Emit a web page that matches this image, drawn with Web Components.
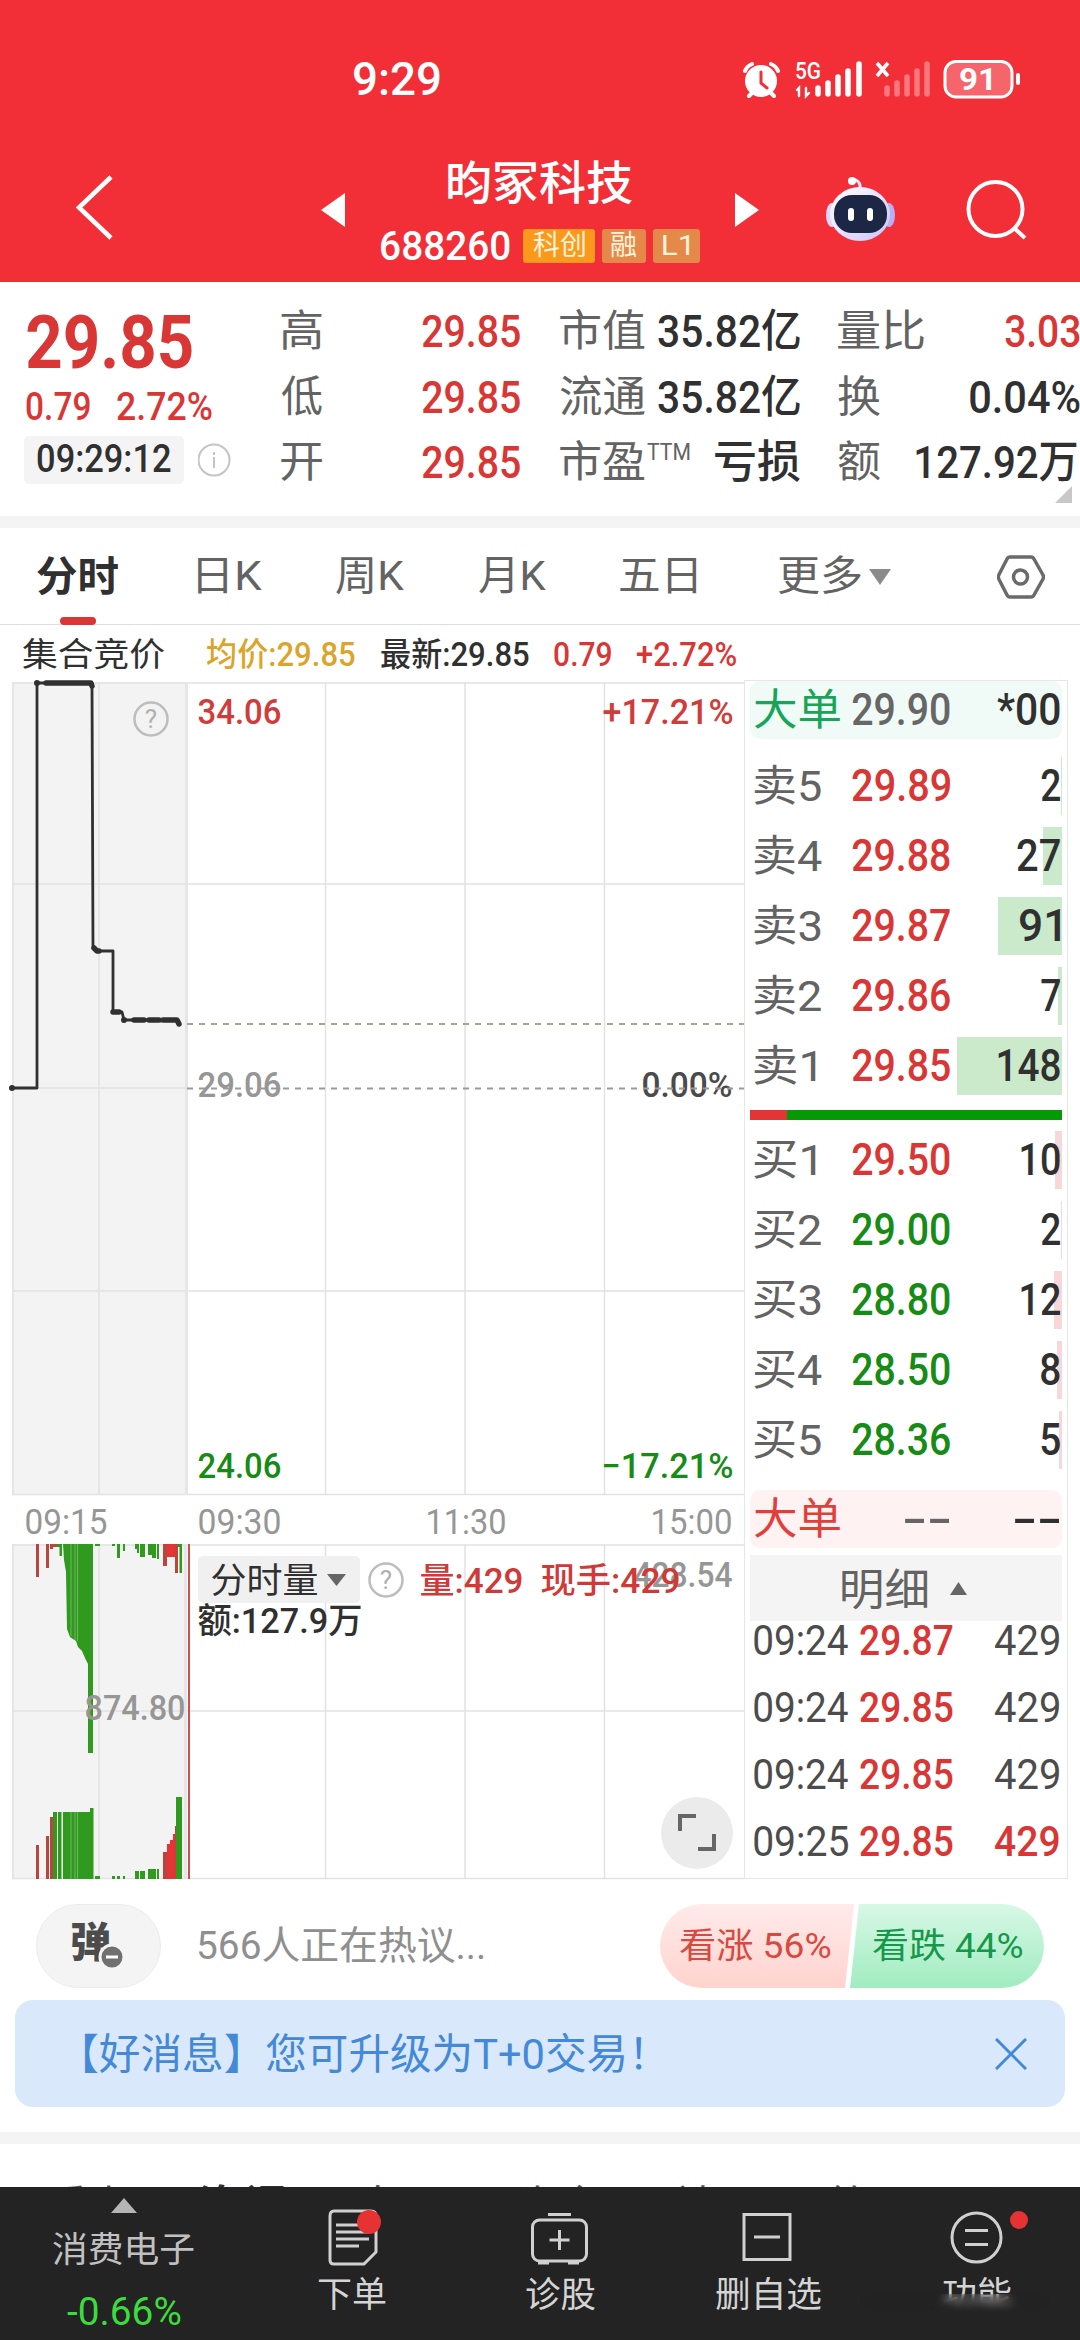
<!DOCTYPE html>
<html lang="zh-CN">
<head>
<meta charset="utf-8">
<title>688260</title>
<style>
    html, body
    {
        margin: 0;
        padding: 0;
        background: #fff;
    }

    body
    {
        width: 1080px;
        height: 2340px;
        overflow: hidden;
        font-family: Roboto, "Noto Sans CJK SC", sans-serif;
        color: #303030;
        --red: #d93636;
        --green: #168c16;
        --grey: #636363;
        --line: #e4e4e4;
    }

    main
    {
        display: flex;
        align-items: flex-start;
        height: 1254px;
    }

    .left
    {
        width: 744px;
    }
</style>
</head>
<body>
    <sq-header code="688260">昀冢科技</sq-header>
    <sq-quote></sq-quote>
    <sq-tabs></sq-tabs>
    <main>
        <div class="left">
            <sq-info></sq-info>
            <sq-chart></sq-chart>
        </div>
        <sq-book></sq-book>
    </main>
    <sq-talk>566人正在热议...</sq-talk>
    <sq-banner>【好消息】您可升级为T+0交易！</sq-banner>
    <sq-more></sq-more>
    <sq-nav></sq-nav>

<script>

class SqElement extends HTMLElement
{
    constructor()
    {
        super();

        this.dom = this.attachShadow({mode: 'open'});
        this.dom.innerHTML = this.render();
    }
}

// status bar and title
customElements.define("sq-header", class extends SqElement
{
    render()
    {
        return `
            <style>
                :host
                {
                    display: block;
                    height: 282px;
                    background: #f22f37;
                    color: #fff;
                }

                .status
                {
                    display: flex;
                    justify-content: space-between;
                    height: 150px;
                    padding: 56px 58px 0 354px;
                    box-sizing: border-box;
                    font-size: 46px;
                    font-weight: 500;
                    line-height: 46px;
                }

                .bar
                {
                    display: grid;
                    grid-template-columns: 321px 438px 321px;
                }

                .side
                {
                    display: flex;
                }

                .title
                {
                    display: grid;
                    grid-template-columns: 24px 1fr 24px;
                }

                .title > svg
                {
                    margin-top: 43px;
                }

                .name
                {
                    display: flex;
                    flex-direction: column;
                    align-items: center;
                    font-size: 46px;
                    font-weight: 500;
                    line-height: 66px;
                }

                .code
                {
                    display: flex;
                    align-items: center;
                    gap: 7px;
                    height: 34px;
                    margin-top: 13px;
                    font-size: 41px;
                    line-height: 34px;
                }

                .code > :first-child
                {
                    margin-right: 6px;
                }

                .badge
                {
                    display: flex;
                    justify-content: center;
                    height: 34px;
                    border-radius: 3px;
                    background: #e5894b;
                    color: #fff3da;
                    font-size: 28px;
                    font-weight: 400;
                }
            </style>

            <div class="status">
                <fit-text w="86">9:29</fit-text>
                <svg width="280" height="46" viewBox="742 56 280 46" fill="none" stroke="#fff" stroke-linecap="round">
                    <circle cx="761" cy="81" r="16" fill="#fff" stroke="none"/>
                    <path d="M745 71q2-5 7-7M778 71q-2-5-7-7M749 96l4-4M774 96l-4-4" stroke-width="4"/>
                    <path d="M761 72v11l6 5" stroke="#f22f37" stroke-width="3"/>
                    <text x="795" y="79" textLength="26" lengthAdjust="spacingAndGlyphs" font-size="24" font-weight="500" fill="#fff" stroke="none">5G</text>
                    <path d="M799 96v-8l-2 2M806 88v8l3-3" stroke-width="2.4"/>
                    <path d="M818 88v6M828 83v11M838 77v17M848 71v23M859 64v30" stroke-width="5.5"/>
                    <path d="M877 63l11 13M888 63l-11 13" stroke-width="3.6" stroke-linecap="butt"/>
                    <path d="M887 88v6M897 83v11M907 77v17M917 71v23M927 64v30" stroke-width="5.5" stroke="#f8787e"/>
                    <rect x="945" y="61.500" width="67" height="35.500" rx="11" fill="#f5656b" stroke-width="3"/>
                    <path d="M1018 75v8" stroke-width="4"/>
                    <text x="959" y="90" textLength="38" lengthAdjust="spacingAndGlyphs" font-size="31" font-weight="700" fill="#fff" stroke="none">91</text>
                </svg>
            </div>
            <div class="bar">
                <div class="side">
                    <svg width="60" height="80" viewBox="70 167 60 80" style="margin: 17px 0 0 70px" fill="none" stroke="#fff" stroke-width="4.500"><path d="M111 177L79 207.500l32 30.500"/></svg>
                </div>
                <div class="title">
                    <svg width="24" height="34"><path d="M24 0v34L0 17z" fill="#fff"/></svg>
                    <div class="name">
                        <fit-text w="184"><slot></slot></fit-text>
                        <div class="code">
                            <fit-text w="129">688260</fit-text>
                            <span class="badge" style="width: 72px; background: #fb991c"><fit-text w="52">科创</fit-text></span>
                            <span class="badge" style="width: 44px"><fit-text w="26">融</fit-text></span>
                            <span class="badge" style="width: 47px"><fit-text w="26">L1</fit-text></span>
                        </div>
                    </div>
                    <svg width="24" height="34"><path d="M0 0v34l24-17z" fill="#fff"/></svg>
                </div>
                <div class="side">
                    <svg width="72" height="70" viewBox="824 174 72 70" style="margin: 24px 0 0 65px">
                        <defs>
                            <linearGradient id="head" x1="0" y1="0" x2="1" y2="1">
                                <stop offset="0" stop-color="#fff"/>
                                <stop offset=".5" stop-color="#e9e2ff"/>
                                <stop offset="1" stop-color="#c3c6fa"/>
                            </linearGradient>
                        </defs>
                        <path d="M860 188q1-8-9-9" fill="none" stroke="#e9e6ff" stroke-width="3"/>
                        <circle cx="852" cy="181" r="4" fill="#fff"/>
                        <ellipse cx="832" cy="215" rx="6" ry="12" fill="#dcd7ff"/>
                        <ellipse cx="889" cy="215" rx="6" ry="12" fill="#b9aff6"/>
                        <ellipse cx="860" cy="214" rx="30" ry="27" fill="url(#head)"/>
                        <rect x="834" y="195" width="53" height="38" rx="18" fill="#1b2745"/>
                        <rect x="848" y="208" width="6" height="13" rx="3" fill="#fff"/>
                        <rect x="867" y="208" width="6" height="13" rx="3" fill="#fff"/>
                    </svg>
                    <svg width="66" height="70" viewBox="962 174 66 70" style="margin: 24px 0 0 67px" fill="none" stroke="#fff" stroke-width="4"><circle cx="994.500" cy="209" r="27"/><path d="M1013 228l11 10"/></svg>
                </div>
            </div>
            `;
    }
});

customElements.define("sq-quote", class extends SqElement
{
    render()
    {
        return `
            <style>
                :host
                {
                    display: grid;
                    grid-template-columns: 257px 263px 278px 1fr;
                    height: 234px;
                    padding-left: 24px;
                    box-sizing: border-box;
                    font-size: 45px;
                    font-weight: 500;
                }

                .price, .change, .col
                {
                    color: var(--red);
                }

                .price
                {
                    height: 78px;
                    margin: 22px 0 0 3px;
                    font-size: 74px;
                    font-weight: 700;
                    line-height: 78px;
                }

                .change
                {
                    display: flex;
                    gap: 27px;
                    height: 50px;
                    margin: 0 0 4px 2px;
                    font-size: 38px;
                    line-height: 50px;
                }

                .time
                {
                    display: flex;
                    align-items: center;
                    gap: 14px;
                }

                .chip
                {
                    height: 48px;
                    width: 160px;
                    padding-left: 13px;
                    box-sizing: border-box;
                    border-radius: 5px;
                    background: #f4f4f4;
                    font-size: 38px;
                    line-height: 47px;
                }

                .col
                {
                    display: grid;
                    grid-template-rows: repeat(3, 65.500px);
                    align-content: start;
                    padding-top: 17px;
                    line-height: 65px;
                }

                .col > div
                {
                    display: flex;
                    justify-content: space-between;
                }

                .col label
                {
                    display: flex;
                    gap: 2px;
                    color: var(--grey);
                    font-size: 43px;
                    font-weight: 400;
                }

                .dark
                {
                    color: #303030;
                }

                sup
                {
                    font-size: 23px;
                    line-height: 46px;
                    vertical-align: top;
                }

                .fold
                {
                    display: block;
                    margin: -10px 0 0 auto;
                }
            </style>

            <div>
                <div class="price"><fit-text w="165">29.85</fit-text></div>
                <div class="change"><fit-text w="64">0.79</fit-text><fit-text w="95">2.72%</fit-text></div>
                <div class="time">
                    <div class="chip"><fit-text w="134">09:29:12</fit-text></div>
                    <svg width="34" height="34" fill="none" stroke="#c4c4c4" stroke-width="2"><circle cx="16" cy="17" r="15.500"/><path d="M16 14v11M16 9v3"/></svg>
                </div>
            </div>
            <div class="col" style="padding-right: 24px">
                <div><label><fit-text w="41">高</fit-text></label><fit-text w="98">29.85</fit-text></div>
                <div><label><fit-text w="41">低</fit-text></label><fit-text w="98">29.85</fit-text></div>
                <div><label><fit-text w="41">开</fit-text></label><fit-text w="98">29.85</fit-text></div>
            </div>
            <div class="col dark" style="padding-left: 16px; padding-right: 22px">
                <div><label><fit-text w="85">市值</fit-text></label><fit-text w="142">35.82亿</fit-text></div>
                <div><label><fit-text w="85">流通</fit-text></label><fit-text w="142">35.82亿</fit-text></div>
                <div><label><fit-text w="85">市盈</fit-text><sup><fit-text w="43">TTM</fit-text></sup></label><fit-text w="85">亏损</fit-text></div>
            </div>
            <div class="col dark" style="padding-left: 16px">
                <div><label><fit-text w="86">量比</fit-text></label><fit-text w="75" style="color: var(--red)">3.03</fit-text></div>
                <div><label><fit-text w="42">换</fit-text></label><fit-text w="110">0.04%</fit-text></div>
                <div><label><fit-text w="42">额</fit-text></label><fit-text w="161" style="margin-right: 3px">127.92万</fit-text></div>
                <svg class="fold" width="25" height="18"><path d="M17 0v17H0z" fill="#c8c8c8"/></svg>
            </div>
            `;
    }
});

customElements.define("sq-tabs", class extends SqElement
{
    render()
    {
        return `
            <style>
                :host
                {
                    display: grid;
                    grid-template-columns: 161px 138px 143px 141px 158px 90px 129px 48px;
                    align-items: center;
                    height: 109px;
                    padding-left: 37px;
                    box-sizing: border-box;
                    border-top: 12px solid #f4f4f4;
                    border-bottom: 1px solid #dedede;
                    color: var(--grey);
                    font-size: 41px;
                    line-height: 97px;
                }

                .active
                {
                    height: 96px;
                    color: #303030;
                    font-weight: 700;
                }

                .active::after
                {
                    content: "";
                    display: block;
                    width: 36px;
                    height: 8px;
                    margin: -9px 0 0 23px;
                    border-radius: 4px;
                    background: var(--red);
                }
            </style>

            <div class="active"><fit-text w="81">分时</fit-text></div>
            <fit-text w="64">日K</fit-text>
            <fit-text w="68">周K</fit-text>
            <fit-text w="67">月K</fit-text>
            <fit-text w="77">五日</fit-text>
            <fit-text w="83">更多</fit-text>
            <svg width="24" height="18"><path d="M1 1h22L12 17z" fill="#8b8b8b"/></svg>
            <svg width="48" height="48" fill="none" stroke="#6a6a6a" stroke-width="3.500" stroke-linejoin="round"><path d="M13 4h21q2 0 3 2l9 16q1 2 0 4l-9 16q-1 2-3 2H13q-2 0-3-2L1.800 26q-1-2 0-4L10 6q1-2 3-2z"/><circle cx="23.500" cy="24" r="7"/></svg>
            `;
    }
});

customElements.define("sq-info", class extends SqElement
{
    render()
    {
        return `
            <style>
                :host
                {
                    display: grid;
                    grid-template-columns: 185px 174px 173px 83px 1fr;
                    height: 57px;
                    padding-left: 22px;
                    font-size: 33px;
                    font-weight: 500;
                    line-height: 60px;
                }
            </style>

            <fit-text w="142" style="font-weight: 400">集合竞价</fit-text>
            <fit-text w="148" style="color: #dba52c">均价:29.85</fit-text>
            <fit-text w="148">最新:29.85</fit-text>
            <fit-text w="57" style="color: var(--red)">0.79</fit-text>
            <fit-text w="99" style="color: var(--red)">+2.72%</fit-text>
            `;
    }
});

// auction + minute chart. All coordinates are page pixels through the viewBox.
customElements.define("sq-chart", class extends SqElement
{
    static RED = "#b8463f";
    static BRIGHT = "#e63434";
    static GREEN = "#2f9a1d";

    // x, width, height
    static TOP = [
        [36, 3, 33, "RED"], [46, 3, 24, "RED"], [50, 3, 5, "RED"], [53, 4, 3, "RED"], [57, 3, 3, "GREEN"], [59.5, 2.5, 12, "GREEN"],
        [95, 5, 2, "GREEN"], [112, 3, 2, "GREEN"], [117, 3, 14, "GREEN"], [123, 2, 7, "GREEN"],
        [135, 2, 5, "GREEN"], [137, 2, 9, "GREEN"], [140, 5, 13, "GREEN"], [148, 4, 11, "GREEN"], [152, 4, 14, "GREEN"], [157, 2, 15, "GREEN"],
        [163, 4, 22, "RED"], [167, 9, 13, "BRIGHT"], [175, 3, 29, "RED"], [178, 2, 3, "GREEN"], [179.5, 2.5, 29, "GREEN"]
    ];

    static BOTTOM = [
        [36, 3, 34, "RED"], [46, 3, 43, "RED"], [50, 3, 62, "RED"], [53, 4, 67, "GREEN"], [58, 3.5, 67, "GREEN"], [63, 27, 67, "GREEN"], [90, 3.5, 71, "GREEN"],
        [95, 5, 3, "GREEN"], [112, 3, 3, "GREEN"], [117, 3, 3, "GREEN"], [123, 2, 3, "GREEN"], [135, 4, 8, "GREEN"], [140, 5, 8, "GREEN"],
        [148, 8, 10, "GREEN"], [157, 2, 10, "GREEN"], [163, 4, 27, "RED"], [167, 3, 35, "BRIGHT"], [170, 3, 39, "BRIGHT"], [173, 3, 45, "BRIGHT"], [175, 2, 53, "RED"],
        [176, 6, 82, "GREEN"]
    ];

    bars(list, base, dir)
    {
        let Chart = this.constructor;
        return list.map(([x, w, h, color]) => `<rect x="${x}" y="${dir > 0 ? base : base - h}" width="${w}" height="${h}" fill="${Chart[color]}"/>`).join("");
    }

    label(x, y, w, text, color, weight = 500)
    {
        return `<text x="${x - 1.5}" y="${y}" textLength="${w + 3}" lengthAdjust="spacingAndGlyphs" fill="${color}" font-weight="${weight}">${text}</text>`;
    }

    help(x, y)
    {
        return `<circle cx="${x}" cy="${y}" r="16.500" fill="none" stroke="#bdbdbd" stroke-width="2.500"/>
                <text x="${x}" y="${y + 9}" text-anchor="middle" font-size="26" fill="#b0b0b0">?</text>`;
    }

    render()
    {
        let Chart = this.constructor;

        return `
            <style>
                :host
                {
                    display: block;
                    height: 1197px;
                }

                svg
                {
                    display: block;
                    font-size: 35px;
                }
            </style>

            <svg width="744" height="1198" viewBox="0 682 744 1198" overflow="visible">
                <path d="M12 682h175v813H12zM12 1544h175v335H12z" fill="#f3f3f3"/>
                <path d="M12 683h732M12 884h732M12 1088h175M12 1291h732M12 1494.500h732M12 1545h732M12 1711h732M12 1878.500h732
                         M13 682v813M99 682v813M325.500 682v813M465 682v813M604.500 682v813
                         M13 1544v335M99 1544v335M325.500 1544v335M465 1544v335M604.500 1544v335" fill="none" stroke="#e2e2e2" stroke-width="1.500"/>
                <path d="M186.500 682v813M185.500 1544v335" stroke="#e6e6e6" stroke-width="3"/>

                <path d="M187 1024h557" stroke="#a8a297" stroke-width="1.800" stroke-dasharray="6 6"/>
                ${this.label(199, 1097, 81, "29.06", "#969696")}
                ${this.label(643, 1097, 88, "0.00%", "#4a4a4a")}
                <path d="M187 1088.500h557" stroke="#9a9a9a" stroke-width="1.800" stroke-dasharray="6 6"/>

                <g fill="none" stroke="#303030" stroke-width="2.800" stroke-linejoin="round" stroke-linecap="round">
                    <path d="M12 1088h25V683h54l1 3 1 261 4 4h16v61h9l2 8h53l2 4"/>
                    <path d="M46 683h45l1 3M53 683h8M94 948l3 3h2M113 1012h6M134 1020h10M149 1020h10M163 1020h14l2 4" stroke-width="5.500"/>
                    <path d="M12 1088h0M37 683h0M124 1020h0" stroke-width="6"/>
                </g>

                ${this.help(151, 719)}
                ${this.label(199, 724, 81, "34.06", "#d03c3a")}
                ${this.label(604, 724, 128, "+17.21%", "#d03c3a")}
                ${this.label(199, 1478, 81, "24.06", "#168c16")}
                ${this.label(603, 1478, 129, "−17.21%", "#168c16")}

                ${this.label(26, 1534, 80, "09:15", "#969696", 400)}
                ${this.label(199, 1534, 81, "09:30", "#969696", 400)}
                ${this.label(427, 1534, 78, "11:30", "#969696", 400)}
                ${this.label(652, 1534, 79, "15:00", "#969696", 400)}

                ${this.bars(Chart.TOP, 1544, 1)}
                <path d="M63 1544h30v209h-5v-89l-3-6-3-7-4-4-2-6-6-4-3-8-1-57-2-12z" fill="${Chart.GREEN}"/>
                ${this.bars(Chart.BOTTOM, 1879, -1)}
                <path d="M71 1544v92M75 1544v96M77.500 1544v97M71 1812v67M75 1812v67M77.500 1812v67" stroke="#7fbf74" stroke-width=".8"/>
                <path d="M189 1544v335" stroke="#c9504b" stroke-width="2"/>
                ${this.label(86, 1720, 98, "874.80", "#969696")}

                <rect x="198" y="1556" width="162" height="47" rx="5" fill="#f0f0f0"/>
                ${this.label(212, 1593, 105, "分时量", "#303030", 400)}
                <path d="M327 1574h19l-9.500 12z" fill="#666"/>
                ${this.help(386, 1580)}
                ${this.label(635, 1587, 96, "428.54", "#969696")}
                ${this.label(421, 1593, 101, "量:429", "#cf3a39")}
                ${this.label(542, 1593, 137, "现手:429", "#cf3a39")}
                ${this.label(199, 1633, 162, "额:127.9万", "#303030")}

                <circle cx="697" cy="1833" r="36" fill="#ebebeb"/>
                <path d="M680 1831v-15h16M698 1849h16v-15" fill="none" stroke="#666" stroke-width="4"/>
            </svg>
            `;
    }
});

// one price level, last value of data is the width of the volume bar
customElements.define("sq-level", class extends HTMLElement
{
    connectedCallback()
    {
        let [name, nameWidth, price, priceWidth, volume, volumeWidth, bar] = this.getAttribute("data").split(",");

        this.dom = this.shadowRoot || this.attachShadow({mode: 'open'});
        this.dom.innerHTML = `
            <style>
                :host
                {
                    display: grid;
                    grid-template-columns: 97px 99px 1fr;
                    height: 58px;
                    padding: 0 2px 0 4px;
                    background: linear-gradient(var(--bar-color), var(--bar-color)) right / ${bar || 0}px 100% no-repeat;
                    font-size: 45px;
                    font-weight: 500;
                    line-height: 58px;
                }

                .name
                {
                    color: var(--name, var(--grey));
                    font-size: 43px;
                    font-weight: 400;
                }

                .price
                {
                    justify-self: end;
                    color: var(--price);
                }

                .volume
                {
                    justify-self: end;
                }
            </style>

            <fit-text class="name" w="${nameWidth}">${name}</fit-text>
            <fit-text class="price" w="${priceWidth}">${price}</fit-text>
            <fit-text class="volume" w="${volumeWidth}">${volume}</fit-text>
            `;
    }
});

customElements.define("sq-book", class extends SqElement
{
    render()
    {
        return `
            <style>
                :host
                {
                    display: block;
                    width: 324px;
                    height: 1199px;
                    margin-top: 55px;
                    padding: 0 5px;
                    box-sizing: border-box;
                    border: 1px solid #e6e6e6;
                }

                .big
                {
                    border-radius: 10px;
                }

                .levels
                {
                    display: grid;
                    gap: 12px;
                }

                .ratio
                {
                    height: 10px;
                    margin: 15px 0 11px;
                    background: linear-gradient(90deg, #e23535 37px, #069906 37px);
                }

                .head
                {
                    display: flex;
                    align-items: center;
                    gap: 23px;
                    height: 66px;
                    margin-top: 7px;
                    padding-left: 92px;
                    background: #f4f4f4;
                    color: var(--grey);
                    font-size: 43px;
                    line-height: 66px;
                }

                .head fit-text
                {
                    margin-top: 3px;
                }

                .ticks
                {
                    margin-top: -14px;
                }

                .ticks div
                {
                    display: grid;
                    grid-template-columns: 106px 94px 1fr;
                    height: 67px;
                    padding: 0 3px 0 4px;
                    color: #4c4c4c;
                    font-size: 42px;
                    line-height: 67px;
                }

                .ticks .p
                {
                    color: var(--red);
                    font-weight: 500;
                }

                .ticks .v
                {
                    justify-self: end;
                }
            </style>

            <sq-level class="big" style="background-color: #f0faf6; --name: #18a558; --price: #666" data="大单,86,29.90,98,*00,63"></sq-level>
            <div class="levels" style="--price: var(--red); --bar-color: #cbe9cb; margin-top: 18px">
                <sq-level data="卖5,67,29.89,98,2,19,1"></sq-level>
                <sq-level data="卖4,68,29.88,98,27,43,19"></sq-level>
                <sq-level data="卖3,67,29.87,98,91,40,64"></sq-level>
                <sq-level data="卖2,67,29.86,98,7,19,4"></sq-level>
                <sq-level data="卖1,62,29.85,98,148,62,105"></sq-level>
            </div>
            <div class="ratio"></div>
            <div class="levels" style="--price: var(--green); --bar-color: #f7d7d7">
                <sq-level style="--price: var(--red)" data="买1,62,29.50,98,10,39,7"></sq-level>
                <sq-level data="买2,67,29.00,98,2,19,1"></sq-level>
                <sq-level data="买3,67,28.80,98,12,39,8"></sq-level>
                <sq-level data="买4,68,28.50,98,8,19,5"></sq-level>
                <sq-level data="买5,67,28.36,98,5,19,3"></sq-level>
            </div>
            <sq-level class="big" style="background-color: #fff2f2; --name: #e0403c; --price: #666; margin-top: 21px" data="大单,86,--,46,--,46"></sq-level>
            <div class="head">
                <fit-text w="85">明细</fit-text>
                <svg width="17" height="13"><path d="M8.500 0L17 13H0z" fill="#666"/></svg>
            </div>
            <div class="ticks">
                <div><fit-text w="94">09:24</fit-text><fit-text class="p" w="93">29.87</fit-text><fit-text class="v" w="64">429</fit-text></div>
                <div><fit-text w="94">09:24</fit-text><fit-text class="p" w="93">29.85</fit-text><fit-text class="v" w="64">429</fit-text></div>
                <div><fit-text w="94">09:24</fit-text><fit-text class="p" w="93">29.85</fit-text><fit-text class="v" w="64">429</fit-text></div>
                <div><fit-text w="94">09:25</fit-text><fit-text class="p" w="93">29.85</fit-text><fit-text class="v p" w="64">429</fit-text></div>
            </div>
            `;
    }
});

customElements.define("sq-talk", class extends SqElement
{
    render()
    {
        return `
            <style>
                :host
                {
                    display: flex;
                    height: 84px;
                    padding: 25px 36px 12px;
                    line-height: 85px;
                }

                .bullet
                {
                    width: 125px;
                    box-sizing: border-box;
                    margin-right: 37px;
                    border: 1px solid #ececec;
                    border-radius: 42px;
                    background: #f4f4f4;
                }

                .text
                {
                    flex: 1;
                    color: #8f8f8f;
                    font-size: 39px;
                }

                .vote
                {
                    width: 194px;
                    box-sizing: border-box;
                    font-size: 35px;
                }

                .up
                {
                    padding-left: 20px;
                    border-radius: 42px 0 0 42px;
                    background: linear-gradient(#ffebea, #ffd3ce);
                    clip-path: polygon(0 0, 100% 0, 185px 100%, 0 100%);
                    color: #d9493f;
                }

                .down
                {
                    margin-left: -4px;
                    padding-left: 23px;
                    border-radius: 0 42px 42px 0;
                    background: linear-gradient(#d8f8e6, #a0ecc0);
                    clip-path: polygon(9px 0, 100% 0, 100% 100%, 0 100%);
                    color: #14994b;
                }
            </style>

            <div class="bullet">
                <svg width="123" height="82" viewBox="37 1905 123 82">
                    <text x="70" y="1957" font-size="41" font-weight="900" fill="#4c4c4c">弹</text>
                    <circle cx="112" cy="1957" r="12" fill="#707070" stroke="#f4f4f4" stroke-width="3"/>
                    <path d="M106 1957h12" stroke="#fff" stroke-width="3"/>
                </svg>
            </div>
            <div class="text"><fit-text w="286"><slot></slot></fit-text></div>
            <div class="vote up"><fit-text w="151">看涨 56%</fit-text></div>
            <div class="vote down"><fit-text w="150">看跌 44%</fit-text></div>
            `;
    }
});

customElements.define("sq-banner", class extends SqElement
{
    render()
    {
        return `
            <style>
                :host
                {
                    display: flex;
                    align-items: center;
                    justify-content: space-between;
                    height: 107px;
                    margin: 0 15px 25px;
                    padding: 0 38px 0 69px;
                    border-radius: 18px;
                    background: #d9e8fa;
                    color: #4489d8;
                    font-size: 42px;
                    line-height: 107px;
                }

                fit-text
                {
                    margin-top: 2px;
                }
            </style>

            <fit-text w="558"><slot></slot></fit-text>
            <svg width="32" height="32" stroke="#4489d8" stroke-width="3"><path d="M1 1l30 30M31 1L1 31"/></svg>
            `;
    }
});

// next section's tabs, mostly below the bottom bar
customElements.define("sq-more", class extends SqElement
{
    render()
    {
        return `
            <style>
                :host
                {
                    display: grid;
                    grid-template-columns: 152px 159px 159px 158px 154px 1fr;
                    height: 55px;
                    padding-left: 46px;
                    box-sizing: border-box;
                    border-top: 12px solid #f4f4f4;
                    color: #555;
                    font-size: 42px;
                    line-height: 126px;
                    overflow: hidden;
                }

                b
                {
                    color: #303030;
                    font-size: 46px;
                }
            </style>

            <span>看点</span><b>资讯</b><span>盘口</span><span>资金</span><span>社区</span><span>简况(F10)</span>
            `;
    }
});

customElements.define("sq-nav", class extends SqElement
{
    render()
    {
        return `
            <style>
                :host
                {
                    display: grid;
                    grid-template-columns: 247px 210px 206px 210px 207px;
                    position: relative;
                    height: 153px;
                    background: #232323;
                    color: #d4d4d4;
                    font-size: 35px;
                    overflow: hidden;
                }

                div
                {
                    display: flex;
                    flex-direction: column;
                    align-items: center;
                    line-height: 50px;
                }

                .index
                {
                    color: #c0c0c0;
                }

                .index svg
                {
                    margin: 11px 0 13px;
                }

                .index b
                {
                    margin-top: 11px;
                    color: #3ddc3d;
                    font-size: 38px;
                    font-weight: 400;
                }

                .item svg
                {
                    margin-top: 15px;
                    margin-bottom: 4px;
                    overflow: visible;
                }

                .haze
                {
                    position: absolute;
                    right: 30px;
                    bottom: 0;
                    width: 190px;
                    height: 46px;
                    background: linear-gradient(#23232300, #232323 18px);
                    backdrop-filter: blur(4px);
                }
            </style>

            <div class="index">
                <svg width="26" height="15"><path d="M13 0l13 15H0z" fill="#b5b5b5"/></svg>
                <fit-text w="141">消费电子</fit-text>
                <b><fit-text w="114">-0.66%</fit-text></b>
            </div>
            <div class="item">
                <svg width="60" height="65" viewBox="322 2202 60 65" fill="none" stroke="#d0d0d0" stroke-width="3">
                    <path d="M334 2211h37q5 0 5 5v36l-12 12h-30q-4 0-4-4v-44q0-5 4-5z"/>
                    <path d="M336 2225h24M336 2232h33M336 2239h33M336 2246h23"/>
                    <circle cx="369" cy="2222" r="12" fill="#e63232" stroke="none"/>
                </svg>
                <fit-text w="68">下单</fit-text>
            </div>
            <div class="item">
                <svg width="60" height="65" viewBox="530 2202 60 65" fill="none" stroke="#d0d0d0" stroke-width="3">
                    <rect x="532.500" y="2220" width="54" height="41" rx="7"/>
                    <path d="M548 2214.500h23M538 2263h11M568 2263h11M559.500 2230v20M549.500 2240h20"/>
                </svg>
                <fit-text w="69">诊股</fit-text>
            </div>
            <div class="item">
                <svg width="60" height="65" viewBox="738 2202 60 65" fill="none" stroke="#d0d0d0" stroke-width="3">
                    <rect x="744" y="2214.500" width="46" height="45"/>
                    <path d="M754 2237h26"/>
                </svg>
                <fit-text w="105">删自选</fit-text>
            </div>
            <div class="item">
                <svg width="60" height="65" viewBox="946 2202 60 65" fill="none" stroke="#d0d0d0" stroke-width="3">
                    <circle cx="975.500" cy="2237.500" r="24.500"/>
                    <path d="M964 2230.500h23M964 2244.500h23"/>
                    <circle cx="1018" cy="2220" r="9" fill="#e63232" stroke="none"/>
                </svg>
                <fit-text w="68">功能</fit-text>
            </div>
            <span class="haze"></span>
            `;
    }
});

// single line of text whose ink is fitted to exactly w pixels.
// Defined last, so the fonts of all parents are known when it measures.
customElements.define("fit-text", class extends HTMLElement
{
    static context = document.createElement("canvas").getContext("2d");

    connectedCallback()
    {
        this.dom = this.shadowRoot || this.attachShadow({mode: 'open'});
        this.dom.innerHTML = `
            <style>
                :host
                {
                    display: inline-block;
                    flex: none;
                    width: ${this.getAttribute("w")}px;
                    white-space: nowrap;
                    vertical-align: top;
                }

                span
                {
                    display: block;
                    width: max-content;
                    transform-origin: 0 50%;
                }
            </style>

            <span><slot></slot></span>
            `;

        let slot = this.querySelector("slot");
        let text = slot ? slot.assignedNodes().map(node => node.textContent).join("") : this.textContent;
        let style = getComputedStyle(this);
        let context = this.constructor.context;
        context.font = `${style.fontWeight} ${style.fontSize} ${style.fontFamily}`;

        let box = context.measureText(text);
        let scale = this.getAttribute("w") / (box.actualBoundingBoxLeft + box.actualBoundingBoxRight);
        this.dom.querySelector("span").style.transform = `scaleX(${scale}) translateX(${box.actualBoundingBoxLeft}px)`;
    }
});

</script>
</body>
</html>
